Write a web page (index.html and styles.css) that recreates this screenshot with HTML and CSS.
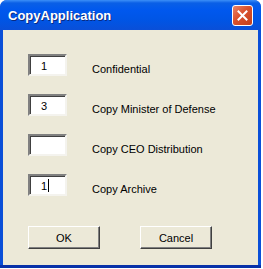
FILE: index.html
```html
<!DOCTYPE html>
<html lang="en">
<head>
    <meta charset="UTF-8">
    <title>CopyApplication</title>
    <link rel="stylesheet" href="styles.css">
</head>
<body>
    <div class="window">
        <div class="titlebar">
            <span class="title">CopyApplication</span>
            <button class="close" aria-label="Close">
                <svg width="11" height="11" viewBox="0 0 11 11">
                    <path d="M1.5 1.5 L9.5 9.5 M9.5 1.5 L1.5 9.5" stroke="#fff" stroke-width="2" stroke-linecap="square"/>
                </svg>
            </button>
        </div>

        <div class="client">
            <div class="row">
                <div class="field">1</div>
                <span class="label">Confidential</span>
            </div>
            <div class="row">
                <div class="field">3</div>
                <span class="label">Copy Minister of Defense</span>
            </div>
            <div class="row">
                <div class="field"></div>
                <span class="label">Copy CEO Distribution</span>
            </div>
            <div class="row">
                <div class="field">1<span class="caret"></span></div>
                <span class="label">Copy Archive</span>
            </div>

            <div class="buttons">
                <button class="btn">OK</button>
                <button class="btn">Cancel</button>
            </div>
        </div>
    </div>
</body>
</html>
```

FILE: styles.css
```css
body {
    margin: 0;
    background: #fff;
    font-family: 'Liberation Sans', Arial, sans-serif;
    font-size: 11px;
    color: #000;
}

.window {
    width: 261px;
    height: 268px;
    background: #0a4fd8;
    border-radius: 7px 7px 0 0;
    display: flex;
    flex-direction: column;
    box-shadow: inset 0 -3px 0 #0831a8;
}

.titlebar {
    height: 30px;
    border-radius: 7px 7px 0 0;
    background: linear-gradient(#3c8ff8 0, #0a5fe6 3px, #0058ee 10px, #0055e5 20px, #0a4fd8 30px);
    display: flex;
    align-items: center;
    justify-content: space-between;
    padding: 1px 8px 0 8px;
    box-sizing: border-box;
}

.title {
    color: #fff;
    font-family: 'Liberation Sans', Arial, sans-serif;
    font-weight: bold;
    font-size: 13px;
    text-shadow: 1px 1px 0 #0a2a80;
}

.close {
    width: 21px;
    height: 21px;
    margin: 0;
    padding: 0;
    border: 1px solid #fff;
    border-radius: 3px;
    background: linear-gradient(135deg, #e8856a 0, #d9502c 45%, #c4401c 100%);
    display: flex;
    align-items: center;
    justify-content: center;
}

.client {
    flex: 1;
    margin: 0 3px 3px 3px;
    background: #ece9d8;
    padding: 24px 0 0 25px;
    box-sizing: border-box;
}

.row {
    display: flex;
    align-items: center;
    gap: 25px;
    height: 22px;
    margin-bottom: 18px;
}

.field {
    width: 39px;
    height: 22px;
    box-sizing: border-box;
    background: #fff;
    border: 2px solid;
    border-color: #808080 #f4f3ee #f4f3ee #808080;
    box-shadow: inset 1px 1px 0 #404040;
    padding: 3px 0 0 11px;
    line-height: 14px;
}

.caret {
    display: inline-block;
    width: 1px;
    height: 13px;
    margin-left: 1px;
    background: #000;
    vertical-align: -2px;
}

.label {
    padding-top: 7px;
}

.buttons {
    display: flex;
    gap: 40px;
    margin-top: 30px;
}

.btn {
    width: 72px;
    height: 23px;
    margin: 0;
    padding: 0;
    font-family: inherit;
    font-size: 11px;
    background: #ece9d8;
    border: 1px solid;
    border-color: #fff #404040 #404040 #fff;
    box-shadow: inset -1px -1px 0 #808080;
}
```
